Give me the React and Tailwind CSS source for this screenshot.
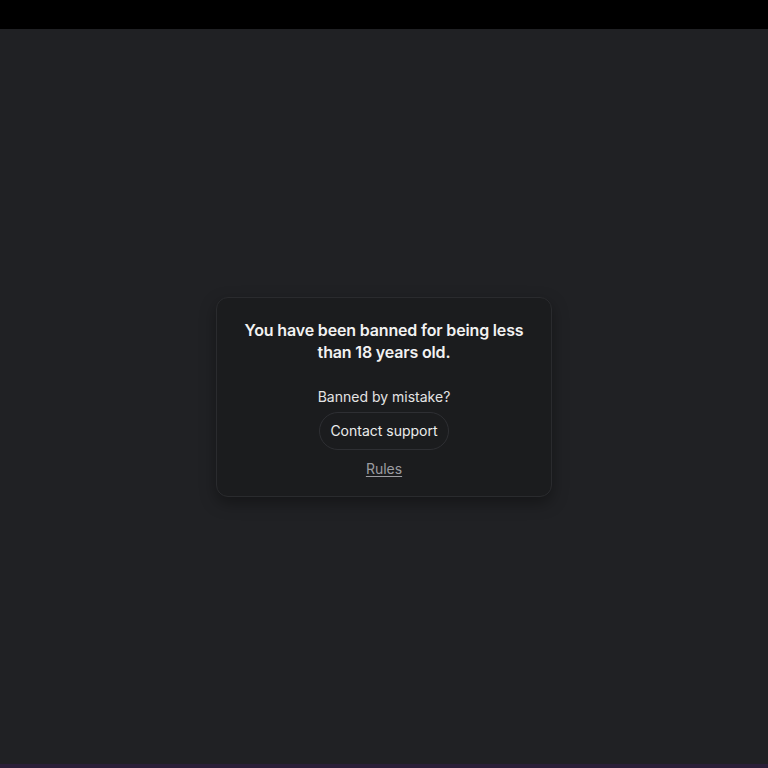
import React from 'react'

const App = () => {
  return (
    <div className="flex h-screen flex-col bg-[#202124]" style={{ fontFamily: 'Inter, "Noto Sans", sans-serif' }}>
      <div className="h-[29px] shrink-0 bg-black"></div>

      <main className="flex flex-1 items-center justify-center">
        <div className="w-[336px] rounded-xl border border-[#2a2b2e] bg-[#1b1c1e] px-4 pt-[21px] pb-[16px] text-center shadow-[0_6px_16px_rgba(0,0,0,0.35)]">
          <h1 className="text-[16px] font-semibold leading-[22px] tracking-[-0.01em] text-[#f2f2f2]">
            You have been banned for being less than 18 years old.
          </h1>

          <p className="mt-[24px] text-[14px] leading-5 text-[#e4e4e4]">Banned by mistake?</p>

          <div className="mt-[5px] flex justify-center">
            <button className="h-[38px] w-[130px] rounded-full border border-[#2e2f33] text-[14px] text-[#ececec]">
              Contact support
            </button>
          </div>

          <div className="mt-[6px]">
            <a href="#" className="text-[14px] leading-5 text-[#9b9ca1] underline underline-offset-2">
              Rules
            </a>
          </div>
        </div>
      </main>

      <div className="h-[4px] shrink-0 bg-[#2a1f38]"></div>
    </div>
  )
}

export default App
